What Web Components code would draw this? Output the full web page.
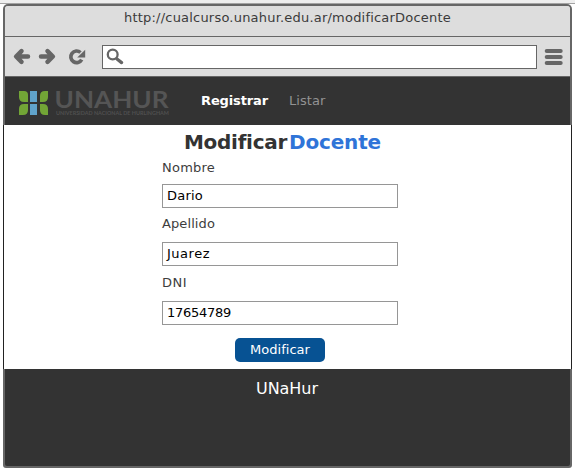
<!DOCTYPE html>
<html lang="es">
<head>
<meta charset="utf-8">
<title>Modificar Docente</title>
<style>
html,body{margin:0;height:100%;background:#fff;overflow:hidden}
body{font:13px/16px "DejaVu Sans",sans-serif;color:#333}
</style>
</head>
<body>
<browser-window>
  <title-bar slot="title"><text-run w="327">http://cualcurso.unahur.edu.ar/modificarDocente</text-run></title-bar>
  <nav-toolbar slot="toolbar"></nav-toolbar>
  <site-header>
    <site-logo slot="logo"></site-logo>
    <text-run class="active" w="67" style="font-weight:bold;color:#fff">Registrar</text-run>
    <text-run w="36.5" style="color:#929292">Listar</text-run>
  </site-header>
  <teacher-form>
    <form-field label="Nombre" lw="53" vw="36" value="Dario"></form-field>
    <form-field label="Apellido" lw="53" vw="43" value="Juarez" style="--gap:10px;--top:8px"></form-field>
    <form-field label="DNI" lw="25" vw="64" value="17654789" style="--gap:10px;--top:9px"></form-field>
    <action-button slot="action"><text-run w="60">Modificar</text-run></action-button>
  </teacher-form>
  <site-footer><text-run w="62">UNaHur</text-run></site-footer>
</browser-window>
<script>
const define = (name, html, setup) => customElements.define(name, class extends HTMLElement {
  connectedCallback() {
    if (this.shadowRoot) return;
    const t = document.createElement('template');
    t.innerHTML = typeof html === 'function' ? html(this) : html;
    this.attachShadow({mode: 'open'}).append(t.content.cloneNode(true));
    if (setup) setup(this);
  }
});

define('browser-window', `<style>
:host{display:flex;flex-direction:column;height:468px;box-sizing:border-box;background:linear-gradient(#eee 0 3px,#a3a3a3 3px 4px,#fff 4px);padding:4px 3px 0}
.frame{flex:1;display:flex;flex-direction:column;border-radius:5px 5px 3px 3px;background:#666;box-sizing:border-box;padding:2px 0;width:569px}
.chrome{margin:0 2px 0;border-radius:3px 3px 0 0;overflow:hidden;background:#ddd}
</style><div class="frame"><div class="chrome"><slot name="title"></slot><slot name="toolbar"></slot></div><slot></slot></div>`);

define('title-bar', `<style>
:host{display:flex;justify-content:center;height:31px;box-sizing:border-box;padding:4px 0 0;border-bottom:1px solid #666;background:#ddd;color:#3b3b3b}
</style><slot></slot>`);

define('nav-toolbar', `<style>
:host{display:grid;grid-template-columns:97px 435px 1fr;height:40px;box-sizing:border-box;padding-top:8px;border-bottom:1px solid #666;background:#ddd}
svg{display:block}
.address{height:24px;box-sizing:border-box;border:1px solid #666;background:#fff}
</style>
<svg width="97" height="24" viewBox="5 45 97 24" fill="none" stroke="#666">
  <path d="M21.500 51.200 16.100 56.500l5.400 5.300M17 56.500h11" stroke-width="4.500" stroke-linecap="round" stroke-linejoin="round"/>
  <path d="M47.500 51.200 52.900 56.500l-5.400 5.300M52 56.500H41" stroke-width="4.500" stroke-linecap="round" stroke-linejoin="round"/>
  <path d="M80.500 52.500A5.800 5.800 0 1 0 81.700 59.600" stroke-width="3.700"/>
  <path d="M85.200 49.800v7.600H77.200Z" fill="#666" stroke="none"/>
</svg>
<div class="address"><svg width="22" height="22" viewBox="103 46 22 22" fill="none" stroke="#666" stroke-linecap="round"><circle cx="112.700" cy="54.500" r="4.900" stroke-width="2.300"/><path d="m117 59 4.600 3.600" stroke-width="3.300"/></svg></div>
<svg width="33" height="24" viewBox="537 45 33 24" fill="#666"><rect x="544.700" y="49" width="18" height="4" rx="2"/><rect x="544.700" y="55" width="18" height="4" rx="2"/><rect x="544.700" y="61" width="18" height="4" rx="2"/></svg>`);

define('site-header', `<style>
:host{display:flex;height:48px;margin:0 2px;background:#333;box-sizing:border-box}
nav{display:flex;gap:21px;padding:16px 0 0 27px}
</style><slot name="logo"></slot><nav><slot></slot></nav>`);

define('site-logo', `<style>:host{display:block;width:169px;height:48px}svg{display:block}</style>
<svg width="169" height="48" viewBox="5 77 169 48">
  <g fill="#72a536"><path d="M19 91h5q4 0 4 4v7h-4q-5 0-5-5Z"/><path d="M48 91v6q0 5-5 5h-3v-6q0-5 5-5Z"/><path d="M19 115v-6q0-5 5-5h4v6q0 5-5 5Z"/><path d="M48 115h-3q-5 0-5-5v-6h3q5 0 5 5Z"/></g>
  <g fill="#60a3cb"><path d="M30 91H37v11h-7Z"/><path d="M30 104H37v11h-7Z"/></g>
  <text x="54.500" y="108" font-family="Lato" font-weight="700" font-size="23.500" fill="#555" textLength="114" lengthAdjust="spacingAndGlyphs">UNAHUR</text>
  <text x="56" y="115" font-family="Lato" font-weight="700" font-size="4.800" fill="#505050" textLength="113" lengthAdjust="spacingAndGlyphs">UNIVERSIDAD NACIONAL DE HURLINGHAM</text>
</svg>`);

define('teacher-form', `<style>
:host{display:block;height:244px;box-sizing:border-box;border:solid #222;border-width:0 1px;background:#fff}
h1{display:flex;gap:2px;margin:0;padding:4px 0 0 180px;font-size:20px;line-height:26px;height:30px;font-weight:bold}
.blue{color:#2f74d8}
.fields{width:236px;margin-left:158px}
.action{padding:13px 0 0 231px}
</style><h1><text-run w="103">Modificar</text-run><text-run class="blue" w="92">Docente</text-run></h1>
<div class="fields" style="padding-top:1px"><slot></slot></div><div class="action"><slot name="action"></slot></div>`);

define('form-field', e => `<style>
:host{display:block;padding-top:var(--top,0px);color:#3d3d3d}
.box{height:24px;box-sizing:border-box;border:1px solid #969696;background:#fff;color:#000;margin-top:var(--gap,8px);padding:3px 4px}
label{display:block;height:16px}
</style><label><text-run w="${e.getAttribute('lw')}">${e.getAttribute('label')}</text-run></label><div class="box"><text-run w="${e.getAttribute('vw')}">${e.getAttribute('value')}</text-run></div>`);

define('action-button', `<style>
:host{display:flex;justify-content:center;width:90px;height:24px;box-sizing:border-box;padding-top:4px;border-radius:5px;background:#075293;color:#fff}
</style><slot></slot>`);

define('site-footer', `<style>
:host{display:flex;justify-content:center;flex:1;margin:0 2px;box-sizing:border-box;padding:10px 1px 0 0;background:#333;color:#fff;font-size:16px;line-height:20px;border-radius:0 0 2px 2px}
</style><slot></slot>`);

// Inline text tracked to a given advance width.
define('text-run', `<style>:host{display:block;white-space:nowrap}span{display:inline-block}</style><span><slot></slot></span>`, e => {
  const w = parseFloat(e.getAttribute('w')), s = e.shadowRoot.querySelector('span');
  requestAnimationFrame(() => {
    const n = e.textContent.length, natural = s.getBoundingClientRect().width;
    s.style.letterSpacing = (w - natural) / n + 'px';
  });
});
</script>
</body>
</html>
